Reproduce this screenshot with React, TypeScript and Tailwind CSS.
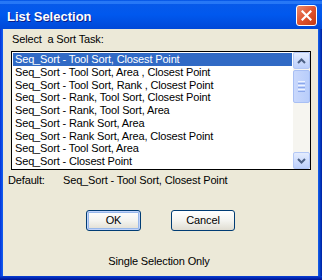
import React from "react";

const rows = [
  "Seq_Sort - Tool Sort, Closest Point",
  "Seq_Sort - Tool Sort, Area , Closest Point",
  "Seq_Sort - Tool Sort, Rank , Closest Point",
  "Seq_Sort - Rank, Tool Sort, Closest Point",
  "Seq_Sort - Rank, Tool Sort, Area",
  "Seq_Sort - Rank Sort, Area",
  "Seq_Sort - Rank Sort, Area, Closest Point",
  "Seq_Sort - Tool Sort, Area",
  "Seq_Sort - Closest Point",
];

function Chevron({ up }: { up?: boolean }) {
  return (
    <svg width="9" height="6" viewBox="0 0 9 6">
      <path
        d={up ? "M1 5 L4.5 1.5 L8 5" : "M1 1 L4.5 4.5 L8 1"}
        stroke="#4d6185"
        strokeWidth="2"
        fill="none"
      />
    </svg>
  );
}

export default function App() {
  const font = { fontFamily: '"Liberation Sans", Arial, sans-serif' };
  return (
    <div
      className="w-[322px] h-[280px] flex flex-col bg-[#0831d9] text-[11px] leading-[13px] text-black tracking-[-0.15px]"
      style={font}
    >
      {/* Title bar */}
      <div className="h-[29px] flex items-center pl-[7px] pr-[5px] bg-gradient-to-b from-[#0a5ae8] via-[#0058ee] to-[#0048d8] relative">
        <div className="absolute left-0 right-0 top-[1px] h-[3px] bg-[#3c8cff] opacity-60" />
        <span className="relative text-white font-bold text-[13px] tracking-normal pt-[3px] [text-shadow:1px_1px_0_#0a1e8a]">
          List Selection
        </span>
        <div className="flex-1" />
        <div className="relative w-[21px] h-[21px] mt-[1px] rounded-[3px] border border-white bg-gradient-to-br from-[#e98a6c] via-[#e0532f] to-[#c23a14] flex items-center justify-center">
          <svg width="11" height="11" viewBox="0 0 11 11">
            <path d="M1.5 1.5 L9.5 9.5 M9.5 1.5 L1.5 9.5" stroke="white" strokeWidth="2.2" strokeLinecap="square" />
          </svg>
        </div>
      </div>
      <div className="flex-1 flex">
        <div className="w-[3px] bg-gradient-to-r from-[#0831d9] to-[#1660f0]" />
        <div className="flex-1 bg-[#ece9d8] flex flex-col">
          <div className="pl-[9px] pt-[4px] h-[22px]">Select &nbsp;a Sort Task:</div>
          <div className="ml-[8px] w-[300px] h-[119px] border border-black bg-white flex">
            <div className="flex-1 flex flex-col p-[1px]">
              {rows.map((r, i) => (
                <div
                  key={i}
                  className={
                    i === 0
                      ? "h-[13px] pl-[2px] bg-[#316ac5] text-white whitespace-nowrap overflow-hidden"
                      : "h-[13px] pl-[2px] whitespace-nowrap overflow-hidden"
                  }
                >
                  {r}
                </div>
              ))}
            </div>
            <div className="w-[17px] bg-[#f6f5f0] flex flex-col">
              <div className="h-[17px] rounded-[2px] border border-[#b4c8f6] bg-gradient-to-b from-[#e4ecfe] to-[#bccffb] flex items-center justify-center">
                <Chevron up />
              </div>
              <div className="mt-[1px] h-[33px] rounded-[2px] border border-[#a8bff4] bg-gradient-to-r from-[#c9d8fc] to-[#b8cdfb] flex flex-col items-center justify-center gap-[1px]">
                <div className="w-[7px] h-[1px] bg-[#eef3fe]" />
                <div className="w-[7px] h-[1px] bg-[#8ca8eb]" />
                <div className="w-[7px] h-[1px] bg-[#eef3fe]" />
                <div className="w-[7px] h-[1px] bg-[#8ca8eb]" />
                <div className="w-[7px] h-[1px] bg-[#eef3fe]" />
                <div className="w-[7px] h-[1px] bg-[#8ca8eb]" />
              </div>
              <div className="flex-1" />
              <div className="h-[17px] rounded-[2px] border border-[#b4c8f6] bg-gradient-to-b from-[#e4ecfe] to-[#bccffb] flex items-center justify-center">
                <Chevron />
              </div>
            </div>
          </div>
          <div className="flex mt-[4px] h-[13px]">
            <span className="pl-[5px] w-[60px]">Default:</span>
            <span>Seq_Sort - Tool Sort, Closest Point</span>
          </div>
          <div className="flex mt-[23px]">
            <div className="ml-[83px] w-[55px] h-[21px] rounded-[3px] border border-[#003c74] bg-gradient-to-b from-[#ffffff] via-[#f4f4f0] to-[#e0ddd2] shadow-[inset_0_0_0_1px_#c1d3fb,inset_0_0_0_2px_#98b8ea] flex items-center justify-center">
              OK
            </div>
            <div className="ml-[30px] w-[64px] h-[21px] rounded-[3px] border border-[#003c74] bg-gradient-to-b from-[#ffffff] via-[#f4f4f0] to-[#e0ddd2] flex items-center justify-center">
              Cancel
            </div>
          </div>
          <div className="mt-[24px] text-center pr-[3px]">Single Selection Only</div>
        </div>
        <div className="w-[4px] bg-gradient-to-r from-[#1660f0] to-[#001ea0]" />
      </div>
      <div className="h-[4px] bg-gradient-to-b from-[#0a3fd8] to-[#001090]" />
    </div>
  );
}
